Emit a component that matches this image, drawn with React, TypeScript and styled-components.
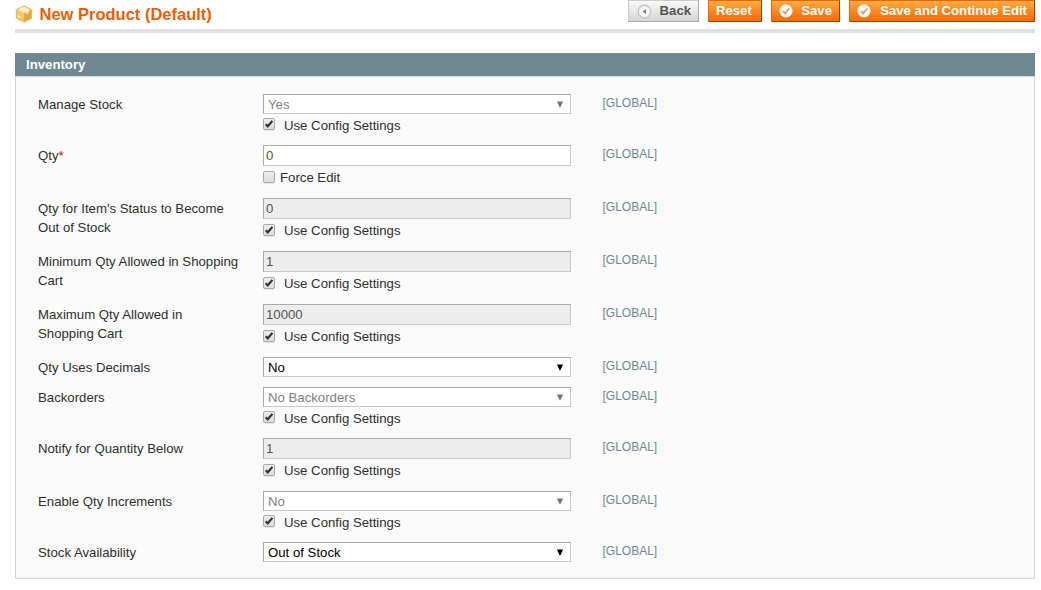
import React from "react";
import styled, { createGlobalStyle } from "styled-components";

const GlobalStyle = createGlobalStyle`
  * { box-sizing: border-box; }
  body {
    margin: 0;
    background: #fff;
    font-family: "Liberation Sans", Arial, sans-serif;
    font-size: 13.2px;
    color: #2f2f2f;
  }
`;

const Page = styled.main`
  width: 1041px;
  height: 590px;
  padding: 0 6px 0 15px;
  overflow: hidden;
`;

const Header = styled.header`
  display: flex;
  justify-content: space-between;
  align-items: flex-start;
  height: 33px;
  border-bottom: 4px solid #dfdfdf;
`;

const Title = styled.h1`
  display: flex;
  align-items: center;
  gap: 6.5px;
  margin: 4px 0 0;
  height: 20px;
  font-size: 16.5px;
  line-height: 20px;
  color: #eb5e00;
  white-space: nowrap;

  svg { display: block; margin-top: -1px; }
`;

const Actions = styled.div`
  display: flex;
  gap: 9px;
`;

const ActionButton = styled.button<{ $muted?: boolean; $width: number }>`
  display: flex;
  align-items: center;
  justify-content: space-between;
  width: ${(p) => p.$width}px;
  height: 22px;
  margin: 0;
  padding: 0 7px 0 ${(p) => (p.$muted ? 8 : 7)}px;
  border: 1px solid;
  border-color: ${(p) => (p.$muted ? "#ccc #aaa #aaa #ccc" : "#ed6502 #a04300 #a04300 #ed6502")};
  background: ${(p) =>
    p.$muted
      ? "linear-gradient(#fafafa, #d4d4d4)"
      : "linear-gradient(#ffac47 0, #fb8a24 45%, #f76a07 100%)"};
  color: ${(p) => (p.$muted ? "#555" : "#fff")};
  font: bold 13.15px/20px "Liberation Sans", Arial, sans-serif;
  white-space: nowrap;
  cursor: pointer;
`;

const SectionHead = styled.h2`
  margin: 20px 0 0;
  height: 23px;
  padding-left: 11px;
  background: #6f8992;
  color: #fff;
  font-size: 13.2px;
  line-height: 23px;
`;

const Fieldset = styled.section`
  height: 503px;
  padding: 17px 22px 0;
  border: 1px solid #d6d6d6;
  background: #fafafa;
`;

const Row = styled.div<{ $height: number }>`
  display: grid;
  grid-template-columns: 225px 308px 1fr;
  height: ${(p) => p.$height}px;
`;

const Label = styled.label`
  line-height: 19px;
  padding-top: 1px;
  white-space: pre-line;
`;

const Required = styled.span`
  color: #d40707;
`;

const Control = styled.div`
  display: flex;
  flex-direction: column;
`;

const Box = styled.div`
  display: flex;
  align-items: center;
  justify-content: space-between;
  border: 1px solid;
  border-color: #aaa #c8c8c8 #c8c8c8 #aaa;
  background: #fff;
  white-space: nowrap;
`;

const SelectBox = styled(Box)<{ $disabled?: boolean }>`
  height: 20px;
  padding: 1px 6px 0 4px;
  color: ${(p) => (p.$disabled ? "#808080" : "#000")};
`;

const InputBox = styled(Box)<{ $disabled?: boolean }>`
  height: 21px;
  padding: 0 2px;
  background: ${(p) => (p.$disabled ? "#ededed" : "#fff")};
  color: #545454;
`;

const CheckLine = styled.div<{ $afterInput: boolean; $gap: number }>`
  display: flex;
  align-items: flex-start;
  gap: ${(p) => p.$gap}px;
  padding-top: ${(p) => (p.$afterInput ? 4 : 3)}px;

  svg { margin-top: 1px; }
`;

const CheckText = styled.span<{ $drop: number }>`
  line-height: 15px;
  padding-top: ${(p) => p.$drop}px;
`;

const Scope = styled.span`
  padding-left: 31.5px;
  font-size: 12px;
  line-height: 18px;
  color: #6f8992;
`;

const Arrow = ({ color }: { color: string }) => (
  <svg width="8" height="8" viewBox="0 0 8 8">
    <path d="M1 .5h6L4.4 6.2h-.8z" fill={color} />
  </svg>
);

const Checkbox = ({ checked }: { checked: boolean }) => (
  <svg width="12" height="13" viewBox="0 0 12 13">
    <defs>
      <linearGradient id="checkFill" x1="0" y1="0" x2="0" y2="1">
        <stop offset="0" stopColor="#eee" />
        <stop offset="1" stopColor="#dcdcdc" />
      </linearGradient>
    </defs>
    <rect x=".5" y=".9" width="11" height="11.4" rx="1.5" fill="none" stroke="#e3e3e3" />
    <rect x=".5" y=".5" width="11" height="11" rx="1.5" fill="url(#checkFill)" stroke="#a9a9a9" />
    {checked && <path d="M2.7 6.2l2.1 2.1L9.4 2.9" fill="none" stroke="#333" strokeWidth="2.2" />}
  </svg>
);

const BoxIcon = () => (
  <svg width="18" height="18" viewBox="0 0 18 18">
    <path d="M9 .8l7.7 3.7v8.7L9 17.3l-7.7-4.1V4.5z" fill="#e9b54c" stroke="#d9b26a" strokeWidth=".8" strokeLinejoin="round" />
    <path d="M9 1.2l7.2 3.7L9 8.6 1.8 4.9z" fill="#fbe6ad" />
    <path d="M1.8 5L9 8.6v8.1l-7.2-3.8z" fill="#f2c767" />
    <path d="M16.2 5L9 8.6v8.1l7.2-3.8z" fill="#e0a945" />
    <path d="M4.6 3.5l7 3.6v2l1.8-.9V6.1L6.6 2.5z" fill="#fff3cf" />
    <path d="M2.8 10.2l2.8 1.4v1.5l-2.8-1.4z" fill="#fff0c0" />
  </svg>
);

const BackIcon = () => (
  <svg width="15" height="15" viewBox="0 0 15 15">
    <circle cx="7.5" cy="7.5" r="6.2" fill="#f8f8f8" stroke="#c6c6c6" strokeWidth="1.4" />
    <path d="M9 5v5L5.7 7.5z" fill="#777" />
  </svg>
);

const SaveIcon = () => (
  <svg width="14" height="14" viewBox="0 0 14 14">
    <circle cx="7" cy="7" r="6.5" fill="#fff" />
    <path d="M4 7.2l2.1 2.3 4-5" fill="none" stroke="#f39a5e" strokeWidth="2" />
  </svg>
);

type Field = {
  label: string;
  required?: boolean;
  kind: "select" | "input";
  value: string;
  disabled?: boolean;
  check?: string;
  checked?: boolean;
};

const config = { disabled: true, check: "Use Config Settings", checked: true };

const fields: Field[] = [
  { label: "Manage Stock", kind: "select", value: "Yes", ...config },
  { label: "Qty", required: true, kind: "input", value: "0", check: "Force Edit" },
  { label: "Qty for Item's Status to Become\nOut of Stock", kind: "input", value: "0", ...config },
  { label: "Minimum Qty Allowed in Shopping\nCart", kind: "input", value: "1", ...config },
  { label: "Maximum Qty Allowed in\nShopping Cart", kind: "input", value: "10000", ...config },
  { label: "Qty Uses Decimals", kind: "select", value: "No" },
  { label: "Backorders", kind: "select", value: "No Backorders", ...config },
  { label: "Notify for Quantity Below", kind: "input", value: "1", ...config },
  { label: "Enable Qty Increments", kind: "select", value: "No", ...config },
  { label: "Stock Availability", kind: "select", value: "Out of Stock" },
];

const rowHeight = (f: Field) => (!f.check ? 30 : f.kind === "input" ? 53 : 51);

const FieldRow = ({ field }: { field: Field }) => {
  const isInput = field.kind === "input";
  return (
    <Row $height={rowHeight(field)}>
      <Label>
        {field.label}
        {field.required && <Required>*</Required>}
      </Label>
      <Control>
        {isInput ? (
          <InputBox $disabled={field.disabled}>{field.value}</InputBox>
        ) : (
          <SelectBox $disabled={field.disabled}>
            {field.value}
            <Arrow color={field.disabled ? "#777" : "#000"} />
          </SelectBox>
        )}
        {field.check && (
          <CheckLine $afterInput={isInput} $gap={field.checked ? 9 : 5}>
            <Checkbox checked={!!field.checked} />
            <CheckText $drop={isInput ? 0 : 1}>{field.check}</CheckText>
          </CheckLine>
        )}
      </Control>
      <Scope>[GLOBAL]</Scope>
    </Row>
  );
};

export default function App() {
  return (
    <Page>
      <GlobalStyle />
      <Header>
        <Title>
          <BoxIcon />
          <span>New Product (Default)</span>
        </Title>
        <Actions>
          <ActionButton $muted $width={71}><BackIcon />Back</ActionButton>
          <ActionButton $width={54}>Reset</ActionButton>
          <ActionButton $width={69}><SaveIcon />Save</ActionButton>
          <ActionButton $width={186}><SaveIcon />Save and Continue Edit</ActionButton>
        </Actions>
      </Header>
      <SectionHead>Inventory</SectionHead>
      <Fieldset>
        {fields.map((f) => (
          <FieldRow key={f.label} field={f} />
        ))}
      </Fieldset>
    </Page>
  );
}
